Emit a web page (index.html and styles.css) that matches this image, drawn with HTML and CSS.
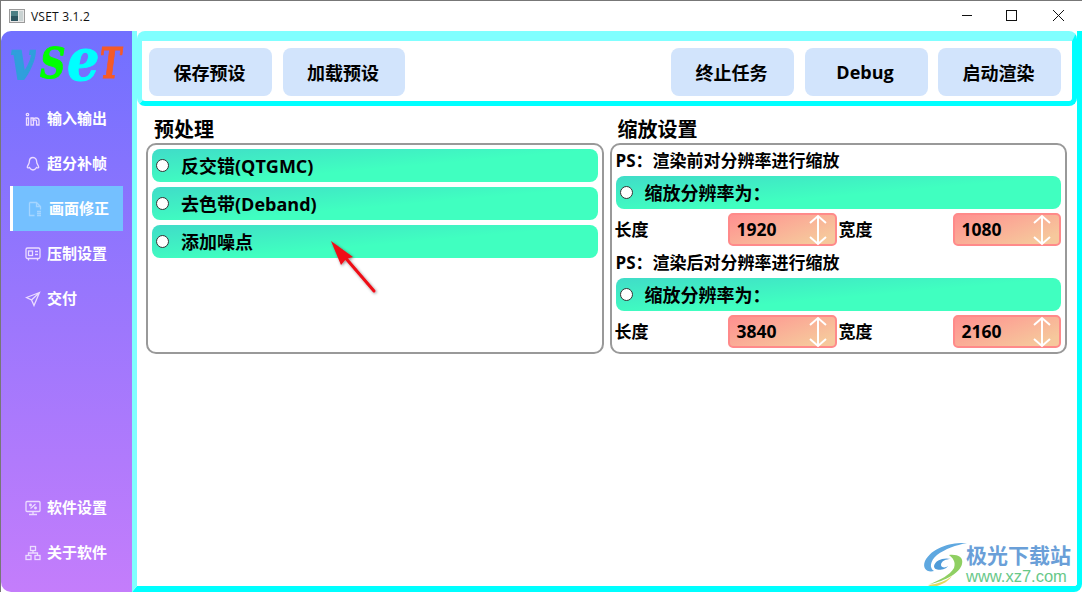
FILE: index.html
```html
<!DOCTYPE html>
<html lang="zh">
<head>
<meta charset="utf-8">
<title>VSET 3.1.2</title>
<link rel="stylesheet" href="styles.css">
</head>
<body>
<div class="window">
  <header class="titlebar">
    <svg class="app-icon" viewBox="0 0 16 14" width="16" height="14"><rect x="0.5" y="0.5" width="15" height="13" fill="#e8e8e8" stroke="#9a9a9a"/><rect x="2" y="2" width="7" height="10" fill="#4d7f85"/><rect x="2" y="7" width="7" height="5" fill="#2d5560"/><rect x="10" y="2" width="4" height="10" fill="#c9d2d2"/></svg>
    <span class="app-title">VSET 3.1.2</span>
    <div class="win-controls">
      <svg viewBox="0 0 46 30" width="46" height="30"><path d="M19 14.500h10" stroke="#111" fill="none"/></svg>
      <svg viewBox="0 0 46 30" width="46" height="30"><rect x="17.500" y="9.500" width="10" height="10" stroke="#111" fill="none"/></svg>
      <svg viewBox="0 0 46 30" width="46" height="30"><path d="M18 9l11 11M29 9l-11 11" stroke="#111" fill="none"/></svg>
    </div>
  </header>
  <div class="app-body">
    <aside class="sidebar">
      <div class="side-top">
        <div class="logo"><span class="l-v">v</span><span class="l-s">S</span><span class="l-e">e</span><span class="l-t">T</span></div>
        <nav class="nav">
          <a class="nav-item"><svg class="nav-icon" viewBox="0 0 16 16"><circle cx="2.500" cy="3.500" r="1.200"/><path d="M1.500 7h2v7h-2zM6 14V7h2v1.200c1-1.600 6-2 6 1.300V14h-2.500V10c0-1.500-3-1.500-3 0v4z"/></svg><span>输入输出</span></a>
          <a class="nav-item"><svg class="nav-icon" viewBox="0 0 16 16"><path d="M8 1.500c-2.500 0-3.700 2-3.700 4.500 0 2-2 3.500-2 5.200 0 1 1.500.8 2.200.3.800 1.500 2.200 2.500 3.500 2.500s2.700-1 3.500-2.500c.7.500 2.200.7 2.200-.3 0-1.700-2-3.200-2-5.200 0-2.500-1.200-4.500-3.700-4.500z"/></svg><span>超分补帧</span></a>
          <a class="nav-item active"><svg class="nav-icon" viewBox="0 0 16 16"><path d="M2.500 1.500h7l4 4v3M2.500 1.500v13h5M9.500 1.500v4h4"/><path d="M10 10.500h4M10 12.500h4M10 14.500h4"/></svg><span>画面修正</span></a>
          <a class="nav-item"><svg class="nav-icon" viewBox="0 0 16 16"><rect x="1" y="2" width="14" height="10.500" rx="1.500"/><rect x="3.500" y="5" width="4" height="4.500"/><path d="M10 5.500h3M10 8.500h3M3.500 12.500v2M12.500 12.500v2"/></svg><span>压制设置</span></a>
          <a class="nav-item"><svg class="nav-icon" viewBox="0 0 16 16"><path d="M14.500 1.500L1.500 6.500l5 2.500 2.500 5.500zM6.500 9l8-7.500"/></svg><span>交付</span></a>
        </nav>
      </div>
      <nav class="nav">
        <a class="nav-item"><svg class="nav-icon" viewBox="0 0 16 16"><rect x="1" y="1.500" width="14" height="10" rx="1"/><path d="M4 14.500h8M8 11.500v3M5.500 8.500l5-4.500"/><circle cx="5.500" cy="5" r=".8"/><circle cx="10.500" cy="8" r=".8"/></svg><span>软件设置</span></a>
        <a class="nav-item"><svg class="nav-icon" viewBox="0 0 16 16"><rect x="5.500" y="1.500" width="5" height="4"/><rect x="1" y="10.500" width="5" height="4"/><rect x="10" y="10.500" width="5" height="4"/><path d="M8 5.500v2.500M3.500 10.500V8h9v2.500"/></svg><span>关于软件</span></a>
      </nav>
    </aside>
    <main class="main">
      <div class="toolbar">
        <div class="btn-group">
          <button class="tool-btn">保存预设</button>
          <button class="tool-btn narrow">加载预设</button>
        </div>
        <div class="btn-group group-right">
          <button class="tool-btn">终止任务</button>
          <button class="tool-btn">Debug</button>
          <button class="tool-btn">启动渲染</button>
        </div>
      </div>
      <div class="content">
        <section class="panel">
          <h2 class="panel-title">预处理</h2>
          <div class="box">
            <div class="option"><i class="radio"></i>反交错(QTGMC)</div>
            <div class="option"><i class="radio"></i>去色带(Deband)</div>
            <div class="option"><i class="radio"></i>添加噪点</div>
          </div>
        </section>
        <section class="panel">
          <h2 class="panel-title">缩放设置</h2>
          <div class="box box-scale">
            <div class="note">PS：渲染前对分辨率进行缩放</div>
            <div class="option"><i class="radio"></i>缩放分辨率为：</div>
            <div class="size-row">
              <span class="size-label">长度</span>
              <div class="spin"><span>1920</span><svg class="spin-arrows" viewBox="0 0 20 32" width="20" height="32"><path d="M10 2v28M2 9l8-7 8 7M2 23l8 7 8-7"/></svg></div>
              <span class="size-label second">宽度</span>
              <div class="spin"><span>1080</span><svg class="spin-arrows" viewBox="0 0 20 32" width="20" height="32"><path d="M10 2v28M2 9l8-7 8 7M2 23l8 7 8-7"/></svg></div>
            </div>
            <div class="note">PS：渲染后对分辨率进行缩放</div>
            <div class="option"><i class="radio"></i>缩放分辨率为：</div>
            <div class="size-row">
              <span class="size-label">长度</span>
              <div class="spin"><span>3840</span><svg class="spin-arrows" viewBox="0 0 20 32" width="20" height="32"><path d="M10 2v28M2 9l8-7 8 7M2 23l8 7 8-7"/></svg></div>
              <span class="size-label second">宽度</span>
              <div class="spin"><span>2160</span><svg class="spin-arrows" viewBox="0 0 20 32" width="20" height="32"><path d="M10 2v28M2 9l8-7 8 7M2 23l8 7 8-7"/></svg></div>
            </div>
          </div>
        </section>
      </div>
    </main>
  </div>
  <svg class="red-arrow" viewBox="0 0 60 66" width="60" height="66">
    <defs><filter id="sh" x="-30%" y="-30%" width="170%" height="170%"><feDropShadow dx="1" dy="1" stdDeviation="1.500" flood-color="#000" flood-opacity=".45"/></filter></defs>
    <g filter="url(#sh)"><path d="M51 56L20 20" stroke="#ee0a14" stroke-width="3" stroke-linecap="round" fill="none"/><path d="M8 6L30 22 23 24 18 30z" fill="#f00a14"/></g>
  </svg>
  <div class="watermark">
    <svg class="wm-logo" viewBox="0 0 46 44" width="46" height="44">
      <path d="M45 1C30 0 10 5 3 19c-3 7 2 12 9 10C7 26 8 19 15 13 23 7 34 3 45 1z" fill="#5fa8e0"/>
      <path d="M12 24c1-6 10-9 17-7-5 0-10 2-10 6 0 3 5 3 7 1-2 4-14 6-14 0z" fill="#4f9bd8"/>
      <path d="M27 13c8-1 15 2 13 9-2 9-17 17-32 20 10-4 20-9 24-16 2-6-1-10-5-13z" fill="#8fcf62"/>
      <path d="M6 43c10-1 18-4 24-9-4 6-12 10-20 11z" fill="#e4d860"/>
    </svg>
    <div class="wm-text">
      <span class="wm-name">极光下载站</span>
      <span class="wm-url">www.xz7.com</span>
    </div>
  </div>
</div>
</body>
</html>
```
FILE: styles.css
```css
* { box-sizing: border-box; }
html, body { margin: 0; padding: 0; }
body {
  width: 1082px;
  height: 592px;
  overflow: hidden;
  font-family: "Open Sans", "Noto Sans CJK SC", sans-serif;
  color: #000;
  background: #fff;
}
.window {
  position: relative;
  width: 1082px;
  height: 592px;
  display: flex;
  flex-direction: column;
  border-top: 1px solid #777;
  border-left: 1px solid #777;
  background: #fff;
}
.titlebar {
  height: 30px;
  flex: none;
  display: flex;
  align-items: center;
  padding-left: 8px;
}
.app-icon { flex: none; margin-right: 6px; }
.app-title { font-size: 12px; letter-spacing: .2px; font-family: "Open Sans", sans-serif; color: #111; }
.win-controls { margin-left: auto; display: flex; padding-right: 1px; }
.win-controls svg { display: block; }
.app-body { flex: 1; display: flex; min-height: 0; }

.sidebar {
  width: 131px;
  flex: none;
  display: flex;
  flex-direction: column;
  justify-content: space-between;
  padding-bottom: 17px;
  border-radius: 10px 0 0 10px;
  background: linear-gradient(180deg, #7170ff 0%, #c47dfb 100%);
}
.logo {
  height: 65px;
  display: flex;
  align-items: center;
  padding: 0 0 0 10px;
  font-family: "DejaVu Serif", serif;
  font-weight: 700;
  font-style: italic;
  line-height: 1;
}
.logo span { display: block; transform-origin: left center; }
.l-v { color: #2f9fdc; font-size: 54px; width: 29px; margin-top: -8px; transform: scaleX(.76); -webkit-text-stroke: 2px #2f9fdc; }
.l-s { color: #00ff00; font-size: 42px; width: 27px; transform: scaleX(.84); -webkit-text-stroke: 1px #00ff00; }
.l-e { color: #00ffff; font-size: 58px; width: 33px; margin-top: -8px; transform: scaleX(.88); -webkit-text-stroke: 1px #00ffff; }
.l-t { color: #f55a28; font-size: 42px; transform: scaleX(.68); -webkit-text-stroke: 1px #f55a28; }
.nav { display: flex; flex-direction: column; }
.nav-item {
  height: 45px;
  width: 113px;
  margin-left: 9px;
  padding-left: 15px;
  display: flex;
  align-items: center;
  gap: 6px;
  color: #fff;
  font-size: 15px;
  font-weight: 700;
  font-family: "Noto Sans CJK SC", sans-serif;
}
.nav-item span { padding-bottom: 2px; }
.nav-item.active {
  background: #74c0ff;
  border-left: 3px solid #fff;
  padding-left: 14px;
  gap: 6px;
}
.nav-icon {
  width: 16px;
  height: 16px;
  flex: none;
  fill: none;
  stroke: #ecdcff;
  stroke-width: 1.300;
}
.active .nav-icon { stroke: #a5d5ff; }

.main {
  flex: 1;
  min-width: 0;
  display: flex;
  flex-direction: column;
  background: #fff;
  border-style: solid;
  border-width: 0 5px 6px 5px;
  border-color: #80ffff #00ffff #00ffff #80ffff;
  border-bottom-right-radius: 8px;
}
.toolbar {
  flex: none;
  height: 75px;
  display: flex;
  justify-content: space-between;
  align-items: center;
  background: #fff;
  border-style: solid;
  border-width: 10px 5px 5px 5px;
  border-color: #80ffff #00ffff #00ffff #80ffff;
  border-radius: 8px;
  padding: 2px 11px 0 7px;
}
.btn-group { display: flex; gap: 11px; }
.group-right { gap: 10.5px; }
.tool-btn {
  width: 123px;
  height: 48px;
  border: 0;
  border-radius: 8px;
  background: #d2e4fc;
  color: #000;
  font-family: "Open Sans", "Noto Sans CJK SC", sans-serif;
  font-size: 18px;
  font-weight: 700;
  padding: 0 2px 1px 0;
}
.tool-btn.narrow { width: 122px; }
.content {
  flex: 1;
  display: grid;
  grid-template-columns: 1fr 1fr;
  column-gap: 6px;
  align-content: start;
  padding: 0 10px 0 9px;
}
.panel-title {
  margin: 0;
  height: 37px;
  padding: 11px 0 0 8px;
  font-size: 20px;
  line-height: 25px;
  font-weight: 700;
}
.box {
  height: 211px;
  border: 2px solid #999;
  border-radius: 10px;
  padding: 4px;
  display: flex;
  flex-direction: column;
  gap: 5px;
}
.box-scale { padding-top: 3px; gap: 4px; }
.option {
  height: 33px;
  flex: none;
  display: flex;
  align-items: center;
  padding: 0 0 2px 4px;
  border-radius: 8px;
  background: linear-gradient(175deg, #40dcc8 0%, #40ffc0 55%);
  font-size: 18px;
  font-weight: 700;
}
.radio {
  width: 13px;
  height: 13px;
  flex: none;
  margin: 2px 12px 0 0;
  border-radius: 50%;
  background: #fff;
  border: 1px solid #333;
}
.note { height: 24px; font-size: 17px; font-weight: 700; line-height: 25px; }
.size-row {
  height: 33px;
  flex: none;
  display: grid;
  grid-template-columns: 112px 109px 116px 1fr;
  align-items: center;
}
.size-label { font-size: 17px; font-weight: 700; padding-bottom: 2px; margin-left: -1px; }
.size-label.second { padding-left: 3px; }
.spin {
  height: 33px;
  display: flex;
  align-items: center;
  justify-content: space-between;
  padding: 0 7px 0 7px;
  border: 2px solid #ff8a8a;
  border-radius: 5px;
  background: linear-gradient(160deg, #ff9090 0%, #f6c89c 85%);
  font-size: 17.5px;
  font-weight: 700;
}
.spin span { padding-bottom: 2px; }
.spin-arrows { flex: none; fill: none; stroke: #fff; stroke-width: 2; }

.red-arrow { position: absolute; left: 322px; top: 234px; }
.watermark {
  position: absolute;
  left: 921px;
  top: 541px;
  display: flex;
  gap: 0;
}
.wm-logo { flex: none; margin-right: -2px; }
.wm-text { display: flex; flex-direction: column; }
.wm-name {
  color: #6a9fd8;
  font-size: 21px;
  font-weight: 700;
  line-height: 25px;
  font-family: "Noto Sans CJK SC", sans-serif;
}
.wm-url {
  color: #68c888;
  font-size: 16.5px;
  line-height: 17px;
  margin-top: 1px;
  font-family: "Liberation Sans", sans-serif;
}
```
